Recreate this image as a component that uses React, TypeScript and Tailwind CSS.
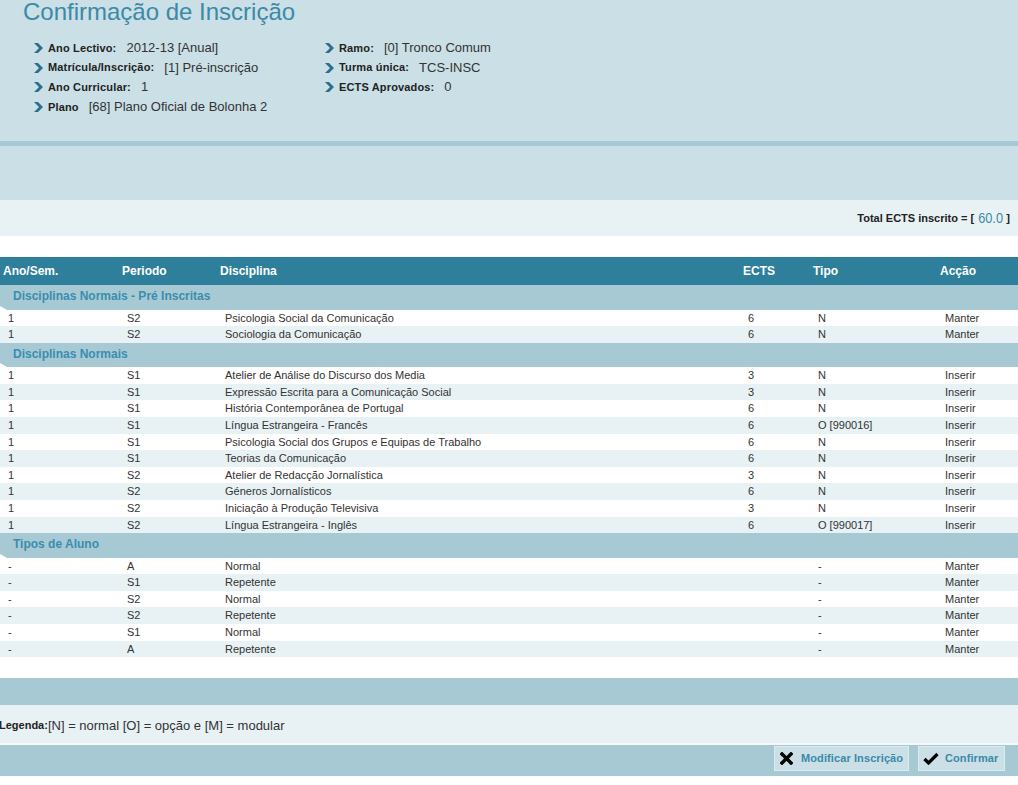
import React from "react";

/* =========================
   DATA
========================= */
const info = [
  [
    { label: "Ano Lectivo:", value: "2012-13 [Anual]" },
    { label: "Matrícula/Inscrição:", value: "[1] Pré-inscrição" },
    { label: "Ano Curricular:", value: "1" },
    { label: "Plano", value: "[68] Plano Oficial de Bolonha 2" },
  ],
  [
    { label: "Ramo:", value: "[0] Tronco Comum" },
    { label: "Turma única:", value: "TCS-INSC" },
    { label: "ECTS Aprovados:", value: "0" },
  ],
];

type Row = [string, string, string, string, string, string];

const groups: { title: string; rows: Row[] }[] = [
  {
    title: "Disciplinas Normais - Pré Inscritas",
    rows: [
      ["1", "S2", "Psicologia Social da Comunicação", "6", "N", "Manter"],
      ["1", "S2", "Sociologia da Comunicação", "6", "N", "Manter"],
    ],
  },
  {
    title: "Disciplinas Normais",
    rows: [
      ["1", "S1", "Atelier de Análise do Discurso dos Media", "3", "N", "Inserir"],
      ["1", "S1", "Expressão Escrita para a Comunicação Social", "3", "N", "Inserir"],
      ["1", "S1", "História Contemporânea de Portugal", "6", "N", "Inserir"],
      ["1", "S1", "Língua Estrangeira - Francês", "6", "O [990016]", "Inserir"],
      ["1", "S1", "Psicologia Social dos Grupos e Equipas de Trabalho", "6", "N", "Inserir"],
      ["1", "S1", "Teorias da Comunicação", "6", "N", "Inserir"],
      ["1", "S2", "Atelier de Redacção Jornalística", "3", "N", "Inserir"],
      ["1", "S2", "Géneros Jornalísticos", "6", "N", "Inserir"],
      ["1", "S2", "Iniciação à Produção Televisiva", "3", "N", "Inserir"],
      ["1", "S2", "Língua Estrangeira - Inglês", "6", "O [990017]", "Inserir"],
    ],
  },
  {
    title: "Tipos de Aluno",
    rows: [
      ["-", "A", "Normal", "", "-", "Manter"],
      ["-", "S1", "Repetente", "", "-", "Manter"],
      ["-", "S2", "Normal", "", "-", "Manter"],
      ["-", "S2", "Repetente", "", "-", "Manter"],
      ["-", "S1", "Normal", "", "-", "Manter"],
      ["-", "A", "Repetente", "", "-", "Manter"],
    ],
  },
];

const headers = ["Ano/Sem.", "Periodo", "Disciplina", "ECTS", "Tipo", "Acção"];

const Chevron = () => (
  <svg width="10" height="10" viewBox="0 0 10 10" className="shrink-0">
    <polygon points="0,0 4,0 9,5 4,10 0,10 5,5" fill="#2b6f8b" />
  </svg>
);

const App = () => {
  return (
    <div className="w-[1018px] min-h-[785px] bg-white font-['Liberation_Sans',Arial,sans-serif] text-[#333]">
      {/* HEADER */}
      <div className="h-[141px] bg-[#cadfe6]">
        <h1 className="pl-[23px] text-[24px] leading-[24px] text-[#3c8aa6]">
          Confirmação de Inscrição
        </h1>
        <div className="mt-[14px] pl-[34px] flex">
          {info.map((col, ci) => (
            <div key={ci} className={ci === 0 ? "w-[291px]" : ""}>
              {col.map((it) => (
                <div key={it.label} className="h-[19.7px] flex items-center">
                  <Chevron />
                  <span className="ml-[4px] text-[11px] tracking-[0.15px] font-bold text-[#222]">
                    {it.label}
                  </span>
                  <span className="ml-[10px] text-[13px] text-[#333]">{it.value}</span>
                </div>
              ))}
            </div>
          ))}
        </div>
      </div>
      <div className="h-[5px] bg-[#a6c9d4]" />
      <div className="h-[54px] bg-[#cadfe6]" />

      {/* TOTAL */}
      <div className="h-[36px] bg-[#e8f1f4] flex items-center justify-end pr-[8px]">
        <span className="text-[11px] font-bold text-[#222]">Total ECTS inscrito = [</span>
        <span className="ml-[2px] mr-[1px] inline-block text-[15px] text-[#3c8aa6] scale-x-[0.85]">60.0</span>
        <span className="text-[11px] font-bold text-[#222]">]</span>
      </div>
      <div className="h-[21px]" />

      {/* TABLE */}
      <div className="grid grid-cols-[119px_98px_523px_70px_127px_81px] h-[28px] bg-[#2e7f9b] text-white text-[12px] font-bold items-center">
        {headers.map((h) => (
          <div key={h} className="pl-[3px]">
            {h}
          </div>
        ))}
      </div>

      {groups.map((g) => (
        <div key={g.title}>
          <div className="relative h-[24.5px] bg-[#a6c9d4] pl-[13px] pt-[1px] text-[12px] leading-[20px] font-bold text-[#3b8db0]">
            {g.title}
            <div className="absolute left-0 bottom-0 w-0 h-0 border-l-[7px] border-l-white border-t-[4px] border-t-transparent" />
          </div>
          {g.rows.map((r, i) => (
            <div
              key={i}
              className={`grid grid-cols-[119px_98px_523px_70px_127px_81px] h-[16.6px] text-[11px] leading-[16.6px] text-[#333] ${
                i % 2 === 0 ? "bg-white" : "bg-[#e8f1f4]"
              }`}
            >
              {r.map((c, ci) => (
                <div key={ci} className="pl-[8px] whitespace-nowrap">
                  {c}
                </div>
              ))}
            </div>
          ))}
        </div>
      ))}

      <div className="h-[21px]" />
      <div className="h-[27px] bg-[#a6c9d4]" />

      {/* LEGENDA */}
      <div className="h-[38px] bg-[#e8f1f4] flex items-center pt-[3px] -ml-[1px]">
        <span className="text-[11px] font-bold text-[#222]">Legenda:</span>
        <span className="text-[13px] text-[#333]">[N] = normal [O] = opção e [M] = modular</span>
      </div>
      <div className="h-[2px] bg-[#f4f8fa]" />

      {/* ACTIONS */}
      <div className="h-[31px] bg-[#a6c9d4] flex justify-end items-start pt-[1px] pr-[13px] gap-[9px]">
        <button className="h-[25px] w-[135px] flex items-center bg-[#cadfe6] border border-[#dcebf0] pl-[5px] text-[11px] font-bold text-[#3c8aa6]">
          <svg width="13" height="13" viewBox="0 0 13 13" className="shrink-0">
            <path d="M2 2 L11 11 M11 2 L2 11" stroke="#000" strokeWidth="3.4" strokeLinecap="square" />
          </svg>
          <span className="ml-[8px] tracking-[0.1px]">Modificar Inscrição</span>
        </button>
        <button className="h-[25px] w-[87px] flex items-center bg-[#cadfe6] border border-[#dcebf0] pl-[4px] text-[11px] font-bold text-[#3c8aa6]">
          <svg width="16" height="13" viewBox="0 0 16 13" className="shrink-0">
            <path d="M1.5 7 L5.5 11 L14.5 2" stroke="#000" strokeWidth="3.2" fill="none" strokeLinejoin="miter" />
          </svg>
          <span className="ml-[6px] tracking-[0.1px]">Confirmar</span>
        </button>
      </div>
    </div>
  );
};

export default App;
